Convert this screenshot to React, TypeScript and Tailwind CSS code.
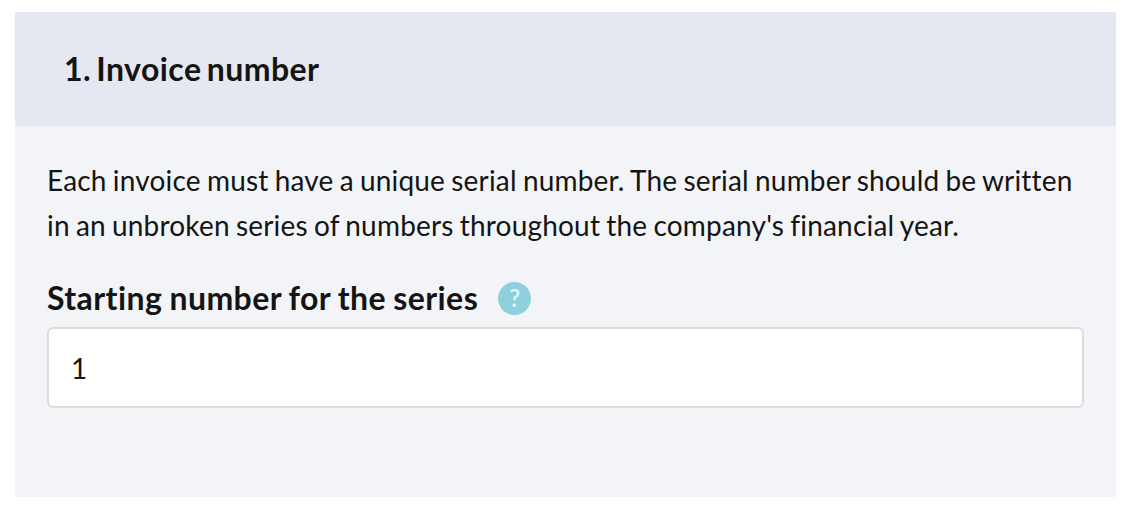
export default function App() {
  return (
    <div className="h-[514px] w-[1130px] overflow-hidden bg-white pl-[15px] pr-[14px] pt-3 font-['Lato',sans-serif] text-[#141414]">
      <section className="h-[485px] bg-[#f3f4f8]">
        <header className="flex h-[114px] items-center bg-[#e6e8f1] pl-[49px]">
          <h1 className="text-[32px] font-bold tracking-[0.45px] [word-spacing:-3px]">1. Invoice number</h1>
        </header>
        <div className="px-8 pt-[32px]">
          <p className="text-[28px] leading-[45px] tracking-[0.19px] [word-spacing:-1.2px] [font-variant-ligatures:common-ligatures]">
            Each invoice must have a unique serial number. The serial number should be written in an unbroken series of
            numbers throughout the company's financial year.
          </p>
          <div className="mt-[28px] flex h-[44px] items-center gap-5">
            <label className="text-[32px] font-bold tracking-[0.42px] [word-spacing:-1px]">Starting number for the series</label>
            <span className="flex h-[33px] w-[33px] items-center justify-center rounded-full bg-[#8ed0dc] text-[24px] font-semibold text-[#e8f5f8]">
              ?
            </span>
          </div>
          <input
            readOnly
            value="1"
            className="mt-[7px] h-[81px] w-full rounded-md border-2 border-[#dcdcdc] bg-white px-[22px] font-['Lato',sans-serif] text-[28px] text-[#141414] outline-none"
          />
        </div>
      </section>
    </div>
  );
}
